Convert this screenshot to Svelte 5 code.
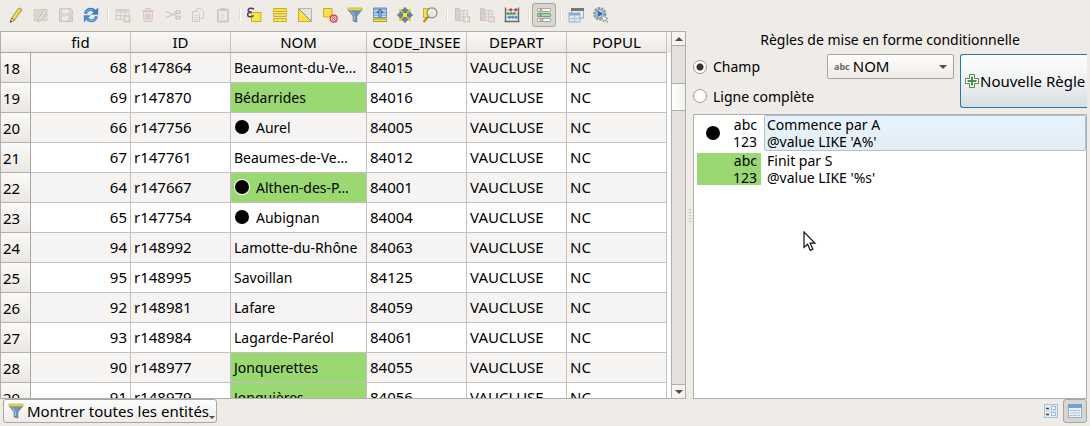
<script>
  const columns = ['fid', 'ID', 'NOM', 'CODE_INSEE', 'DEPART', 'POPUL'];

  const rows = [
    { n: 18, fid: 68, id: 'r147864', nom: 'Beaumont-du-Ve…', code: '84015' },
    { n: 19, fid: 69, id: 'r147870', nom: 'Bédarrides', code: '84016', green: true },
    { n: 20, fid: 66, id: 'r147756', nom: 'Aurel', code: '84005', dot: true },
    { n: 21, fid: 67, id: 'r147761', nom: 'Beaumes-de-Ve…', code: '84012' },
    { n: 22, fid: 64, id: 'r147667', nom: 'Althen-des-P…', code: '84001', green: true, dot: true },
    { n: 23, fid: 65, id: 'r147754', nom: 'Aubignan', code: '84004', dot: true },
    { n: 24, fid: 94, id: 'r148992', nom: 'Lamotte-du-Rhône', code: '84063' },
    { n: 25, fid: 95, id: 'r148995', nom: 'Savoillan', code: '84125' },
    { n: 26, fid: 92, id: 'r148981', nom: 'Lafare', code: '84059' },
    { n: 27, fid: 93, id: 'r148984', nom: 'Lagarde-Paréol', code: '84061' },
    { n: 28, fid: 90, id: 'r148977', nom: 'Jonquerettes', code: '84055', green: true },
    { n: 29, fid: 91, id: 'r148979', nom: 'Jonquières', code: '84056', green: true }
  ];

  const rules = [
    { name: 'Commence par A', expr: "@value LIKE 'A%'", dot: true, selected: true },
    { name: 'Finit par S', expr: "@value LIKE '%s'", green: true }
  ];

  const tools = [
    [
      { icon: 'pencil', label: 'Basculer en mode édition' },
      { icon: 'multiedit', label: 'Édition multiple', off: true },
      { icon: 'save', label: 'Enregistrer', off: true },
      { icon: 'reload', label: 'Recharger la table' }
    ],
    [
      { icon: 'addrow', label: 'Ajouter une entité', off: true },
      { icon: 'trash', label: 'Supprimer', off: true },
      { icon: 'cut', label: 'Couper', off: true },
      { icon: 'copy', label: 'Copier', off: true },
      { icon: 'paste', label: 'Coller', off: true }
    ],
    [
      { icon: 'expression', label: 'Sélectionner par expression' },
      { icon: 'selectall', label: 'Tout sélectionner' },
      { icon: 'invert', label: 'Inverser la sélection' },
      { icon: 'deselect', label: 'Tout désélectionner' },
      { icon: 'funnel', label: 'Filtrer' },
      { icon: 'totop', label: 'Déplacer en haut' },
      { icon: 'pan', label: 'Centrer sur la sélection' },
      { icon: 'zoom', label: 'Zoomer sur la sélection' }
    ],
    [
      { icon: 'newfield', label: 'Nouveau champ', off: true },
      { icon: 'delfield', label: 'Supprimer le champ', off: true },
      { icon: 'abacus', label: 'Calculatrice de champ' }
    ],
    [{ icon: 'conditional', label: 'Mise en forme conditionnelle', active: true }],
    [
      { icon: 'dock', label: 'Ancrer la table' },
      { icon: 'actions', label: 'Actions' }
    ]
  ];

  let scope = $state('champ');
  let field = $state('NOM');
</script>

{#snippet glyph(name)}
  <svg class="glyph" width="16" height="16" viewBox="0 0 16 16" aria-hidden="true">
    {#if name === 'pencil'}
      <path d="M10.5 1.2 13.8 3.2 6.6 13 3.4 11z" fill="#e0ca38" stroke="#a8982a" stroke-width=".8" />
      <path d="M11.8 2.2 5 12" stroke="#fbf08a" />
      <path d="M3.4 11 6.6 13 2.2 15.4z" fill="#e6d8c4" stroke="#666" stroke-width=".7" />
      <path d="M2.6 13.4 4.2 14.4 2 15.6z" fill="#333" />
      <path d="M10.5 1.2 11.2.4 14.3 2.3 13.8 3.2z" fill="#9a9a8c" />
    {:else if name === 'multiedit'}
      <path d="M1 2.5h13v2.5H1zM1 6.8h13v2.5H1zM1 11.2h13v2.5H1z" fill="#c9c7b4" stroke="#aaa896" />
      <path d="M12 2 14.5 3.6 8 13 4.8 14.8 5.5 11.4z" fill="#e2dcc8" stroke="#8e8878" />
    {:else if name === 'save'}
      <path d="M1.5 1.5h11l2 2v11h-13z" fill="#c2c2c2" stroke="#999" />
      <path d="M4 2h7v4.5H4zM3.5 9h8v5h-8z" fill="#eee" stroke="#aaa" stroke-width=".7" />
      <path d="M14 7 15.5 8.4 10 14.6 8 15z" fill="#dcb8ae" stroke="#a99" stroke-width=".6" />
    {:else if name === 'reload'}
      <path d="M2.500 6.800C3 3.400 6 1.900 9 2.500c1.300.3 2.200 1 2.900 1.800" fill="none" stroke="#3d7dc4" stroke-width="3.200" />
      <path d="M15.200.6v7.200H8z" fill="#3d7dc4" />
      <path d="M13.500 9.200C13 12.600 10 14.100 7 13.500c-1.300-.3-2.200-1-2.900-1.800" fill="none" stroke="#4c8dd2" stroke-width="3.200" />
      <path d="M.8 15.400V8.200H8z" fill="#4c8dd2" />
      <path d="M3 5.500C4 3 7 2 9.500 3M6 13.200c2 .6 4.500 0 6-2" fill="none" stroke="#a7cbee" stroke-width=".9" />
    {:else if name === 'addrow'}
      <path d="M1 2.500h13v10H1z" fill="#e8e8e4" stroke="#a8a8a4" />
      <path d="M1 3h13v2.500H1z" fill="#bbb" />
      <path d="M1 8.500h13M5.500 3v9.500M10 3v9.500" stroke="#aaa" />
      <path d="M8.500 8.500h7v7h-7z" fill="#a5a27e" />
      <path d="M12 9.500v5M9.500 12h5M10.200 10.200l3.600 3.600M13.800 10.200l-3.600 3.600" stroke="#fff" stroke-width=".8" />
    {:else if name === 'trash'}
      <path d="M3.500 4.500h9l-.5 10H4z" fill="#e8d6d6" stroke="#b89898" />
      <path d="M2 3.800h12M6 3.500v-2h4v2M6.300 6.500v6M8 6.500v6M9.700 6.500v6" fill="none" stroke="#b08a8a" />
    {:else if name === 'cut'}
      <path d="M1 4.500 11.500 9M1 10.500 11.500 6" stroke="#999" stroke-width="1.300" fill="none" />
      <ellipse cx="13" cy="5" rx="2.200" ry="1.500" fill="none" stroke="#888" stroke-width="1.200" />
      <ellipse cx="13" cy="10.500" rx="2.200" ry="1.500" fill="none" stroke="#888" stroke-width="1.200" />
    {:else if name === 'copy'}
      <path d="M6.500 1.500H11l2.500 2.500v7h-7z" fill="#eee" stroke="#aaa" />
      <path d="M2.500 4.500H7L9.500 7v7.500h-7z" fill="#eee" stroke="#a5a5a5" />
      <path d="M4 8.500h4M4 10.500h4M4 12.500h4" stroke="#bbb" />
    {:else if name === 'paste'}
      <path d="M2.500 2.500h11v12.500h-11z" fill="#bdbdb8" stroke="#9c9c98" />
      <path d="M4.500 4.500h7v8.500h-7z" fill="#f2f2f2" />
      <path d="M5.500 1h5v2.500h-5z" fill="#999" />
      <path d="M6 7h4M6 9h4M6 11h3" stroke="#bbb" />
    {:else if name === 'expression'}
      <path d="M4.500 5.500h9.500v9H4.500z" fill="#fbe64a" stroke="#c9ab1e" />
      <path d="M7 2.300C4.500.4 1.200 1.200 1.200 3.300c0 1.400 1.500 1.900 3.300 1.800C2 5.200.5 6 .5 7.600c0 2.500 4 2.900 6.200.9" fill="none" stroke="#5d3370" stroke-width="1.600" />
    {:else if name === 'selectall'}
      <path d="M1.500 1.500h13v3h-13zM1.500 6.500h13v3h-13zM1.500 11.500h13v3h-13z" fill="#fbe24a" stroke="#cfae22" />
    {:else if name === 'invert'}
      <path d="M1.500 1.500h13v13h-13z" fill="#e3e4e6" stroke="#b9b49a" />
      <path d="M1.500 1.500v13h13z" fill="#fbe24a" stroke="#d0ae22" />
      <path d="M2 2l12 12" stroke="#8b8b86" />
    {:else if name === 'deselect'}
      <path d="M1.500 1.500h8.500v8.500H1.500z" fill="#fbe24a" stroke="#cfae22" />
      <circle cx="11.700" cy="11.700" r="3.500" fill="#f6d5d5" stroke="#d43c3c" stroke-width="1.200" />
      <path d="M9.200 9.200l5 5M9.500 12l2.400 2.400M11.500 9.200l2.400 2.400" stroke="#d43c3c" stroke-width=".9" />
    {:else if name === 'funnel'}
      <path d="M1 2.800h14L9.800 9v6l-3.600-1V9z" fill="#6a94c0" stroke="#4d7297" stroke-width=".8" />
      <path d="M1 1h14v2.300H1z" fill="#f0dc4a" stroke="#c0a82c" stroke-width=".7" />
      <path d="M4 4.300 7.400 8.500V13" fill="none" stroke="#a9c6e2" />
    {:else if name === 'totop'}
      <path d="M1.500 1h13v10h-13z" fill="#8bb2d6" stroke="#6f93b5" />
      <path d="M2 4h12M2 7h12M2 9.500h12" stroke="#d2e2f0" />
      <path d="M1.500 12h13v2.500h-13z" fill="#fbe24a" stroke="#b69c2a" />
      <path d="M8 1.500 12 6H9.500v4.500h-3V6H4z" fill="#326ba3" />
      <path d="M8 3v7" stroke="#c4daee" />
    {:else if name === 'pan'}
      <path d="M2 2h4v4H2zM10 2h4v4h-4zM2 10h4v4H2zM10 10h4v4h-4z" fill="#e6cc3e" />
      <path d="M5.500 5.500h5v5h-5z" fill="#fbe24a" stroke="#cfae22" />
      <path d="M8 .3 11.200 4H9.200v1.500H6.800V4H4.800zM8 15.700 4.800 12h2v-1.500h2.400V12h2zM.3 8 4 4.800v2h1.500v2.400H4v2zM15.700 8 12 11.200v-2h-1.500V6.800H12v-2z" fill="#5b87b4" stroke="#3d638c" stroke-width=".6" />
    {:else if name === 'zoom'}
      <path d="M1.500 1.500h9v9h-9z" fill="#fbe24a" stroke="#cfae22" />
      <path d="M6.300 9.500 1.500 15" stroke="#c08c2e" stroke-width="2.200" />
      <circle cx="10" cy="5.800" r="5" fill="#e9e9df" fill-opacity=".9" stroke="#8d8d88" stroke-width="1.200" />
      <path d="M7 5.500C7.300 3.800 8.700 2.900 10.200 2.900" fill="none" stroke="#fff" stroke-width="1.200" />
    {:else if name === 'newfield' || name === 'delfield'}
      <path d="M1.500 1.500h4v12h-4z" fill="#b8b8b0" stroke="#999" />
      <path d="M6 3.500h7.500v10H6z" fill="#e2e2dc" stroke="#a8a8a0" />
      <path d="M2 5h3.500M2 8h3.500M2 11h3.500M6 7h7.500M6 10h7.500M9.500 3.500v10" stroke="#aaa" />
      <path d="M9 9h7v6.500H9z" fill={name === 'newfield' ? '#a5a27e' : '#c8a09c'} />
      <path d="M10.500 10.500l4 3.500M14.500 10.500l-4 3.500" stroke="#fff" />
      {#if name === 'newfield'}<path d="M12.500 9.500v5.500M10 12.200h5" stroke="#fff" stroke-width=".8" />{/if}
    {:else if name === 'abacus'}
      <path d="M1.500.5v14M14.500.5v14M.5 14.500h15" stroke="#6b6b6b" stroke-width="1.400" />
      <path d="M2 2.800h12M2 6.500h12M2 10.200h12" stroke="#999" stroke-width=".8" />
      <g fill="#d6383e"><circle cx="6.800" cy="2.800" r="1.600" /><circle cx="11.800" cy="2.800" r="1.600" /></g>
      <g fill="#4aa564"><circle cx="4" cy="6.500" r="1.600" /><circle cx="7" cy="6.500" r="1.600" /><circle cx="10" cy="6.500" r="1.600" /></g>
      <g fill="#5c8fc4"><circle cx="5.500" cy="10.200" r="1.600" /><circle cx="8.700" cy="10.200" r="1.600" /><circle cx="12" cy="10.200" r="1.600" /></g>
    {:else if name === 'conditional'}
      <rect x="1.500" y="1.500" width="13" height="3" rx=".6" fill="#fff" stroke="#a5a5a5" />
      <rect x="1.500" y="6.500" width="13" height="3" rx=".6" fill="#a4dba8" stroke="#62a567" />
      <rect x="1.500" y="11.500" width="13" height="3" rx=".6" fill="#fff" stroke="#a5a5a5" />
      <path d="M3.500 3h3M3.500 8h2" stroke="#555" />
      <path d="M3.500 13h4" stroke="#d6383e" />
    {:else if name === 'dock'}
      <rect x="3.500" y="1.500" width="12" height="9.500" fill="#ececec" stroke="#a8a8a8" />
      <path d="M3 1h13v3H3z" fill="#777" />
      <rect x="1" y="6" width="11" height="9" fill="#dbe9f5" stroke="#8fb3d2" />
      <path d="M1 6h11v2.500H1z" fill="#86afd6" />
      <path d="M1 11.500h11M6.500 8v7" stroke="#a3c2dd" />
    {:else if name === 'actions'}
      <circle cx="6.800" cy="6.800" r="5.500" fill="#dfe8f0" stroke="#8a98a4" stroke-width="2.400" stroke-dasharray="2.400 .9" />
      <circle cx="6.800" cy="6.800" r="4.200" fill="#c4d9ec" stroke="#7e90a0" />
      <path d="M4.600 3.600 10.200 6.800 4.600 10z" fill="#2d6cab" />
      <path d="M8.500 8.500 15 11.500 12.700 12.300 15 14.800 14 15.600 11.800 13 10.500 15z" fill="#fff" stroke="#888" stroke-width=".8" />
    {:else if name === 'form'}
      <rect x="1.500" y="1.500" width="13" height="13" fill="#e4edf5" stroke="#a3c0de" />
      <path d="M3 5.500h3M3 11.500h3" stroke="#444" stroke-width="1.400" />
      <rect x="8.500" y="3.500" width="4" height="3" fill="#fff" stroke="#9bbcdb" />
      <rect x="8.500" y="9.500" width="4" height="3" fill="#fff" stroke="#9bbcdb" />
      <path d="M3 8h10" stroke="#c4d6e8" />
    {:else if name === 'table'}
      <rect x="1.500" y="1.500" width="13" height="13" fill="#f0f4f8" stroke="#8fb0d2" />
      <path d="M1 1h14v4H1z" fill="#6da3d8" />
      <path d="M3 7.500h10M3 10h10M3 12.500h10" stroke="#a3bfdb" />
      <path d="M5.500 5v9M10.500 5v9" stroke="#d9e5f0" />
    {:else if name === 'plus'}
      <path d="M5.500 1.500h5v4h4v5h-4v4h-5v-4h-4v-5h4z" fill="#fff" stroke="#4c8d4f" />
      <path d="M8 3.500v9M3.500 8h9" stroke="#4c8d4f" stroke-width="2" />
    {/if}
  </svg>
{/snippet}

<div class="window">
  <div class="toolbar" role="toolbar" aria-label="Table attributaire">
    {#each tools as group, g}
      {#if g > 0}<span class="sep"></span>{/if}
      {#each group as tool}
        <button class="tool" class:active={tool.active} class:off={tool.off} disabled={tool.off} aria-label={tool.label}>
          {@render glyph(tool.icon)}
        </button>
      {/each}
    {/each}
  </div>

  <main class="body">
    <section class="grid-pane">
      <div class="viewport">
        <table>
          <colgroup>
            <col class="c-num" /><col class="c-std" /><col class="c-std" /><col class="c-nom" />
            <col class="c-std" /><col class="c-std" /><col class="c-std" /><col />
          </colgroup>
          <thead>
            <tr>
              <th class="corner"></th>
              {#each columns as c}<th scope="col">{c}</th>{/each}
              <th class="rest"></th>
            </tr>
          </thead>
          <tbody>
            {#each rows as r}
              <tr>
                <th scope="row">{r.n}</th>
                <td class="num">{r.fid}</td>
                <td>{r.id}</td>
                <td class="name" class:green={r.green}>
                  {#if r.dot}<span class="dot" class:ring={r.green}></span>{/if}{r.nom}
                </td>
                <td>{r.code}</td>
                <td>VAUCLUSE</td>
                <td>NC</td>
                <td class="rest"></td>
              </tr>
            {/each}
          </tbody>
        </table>
      </div>
      <div class="scrollbar">
        <button class="step" aria-label="Défiler vers le haut"><i class="tri up"></i></button>
        <div class="track"><div class="thumb"></div></div>
        <button class="step last" aria-label="Défiler vers le bas"><i class="tri"></i></button>
      </div>
    </section>

    <div class="splitter"><i></i><i></i><i></i><i></i><i></i></div>

    <section class="rules-pane">
      <h1>Règles de mise en forme conditionnelle</h1>
      <div class="form">
        <label class="radio"><input type="radio" name="scope" value="champ" bind:group={scope} />Champ</label>
        <div class="combo">
          <span class="type">abc</span>
          <select bind:value={field} aria-label="Champ">
            {#each columns as c}<option>{c}</option>{/each}
          </select>
          <i class="tri"></i>
        </div>
        <button class="new-rule">{@render glyph('plus')}Nouvelle Règle</button>
        <label class="radio"><input type="radio" name="scope" value="ligne" bind:group={scope} />Ligne complète</label>
      </div>
      <ul class="rules">
        {#each rules as rule}
          <li>
            <div class="preview" class:green={rule.green}>
              {#if rule.dot}<span class="dot big"></span>{/if}
              <span class="sample">abc<br />123</span>
            </div>
            <button class="rule" class:selected={rule.selected}>{rule.name}<br />{rule.expr}</button>
          </li>
        {/each}
      </ul>
    </section>
  </main>

  <footer>
    <button class="filter">{@render glyph('funnel')}Montrer toutes les entités<i class="tri"></i></button>
    <span class="views">
      <button class="view" aria-label="Vue formulaire">{@render glyph('form')}</button>
      <button class="view on" aria-label="Vue table">{@render glyph('table')}</button>
    </span>
  </footer>

  <svg class="cursor" width="14" height="21" viewBox="0 0 14 21" aria-hidden="true">
    <path d="M1 1v15.500l3.600-3.300 2.700 6.200 2.600-1.200-2.700-6h4.700z" fill="#fff" stroke="#111" stroke-width="1.200" />
  </svg>
</div>

<style>
  :global(body) {
    margin: 0;
    background: #efebe7;
  }
  .window {
    position: relative;
    display: flex;
    flex-direction: column;
    height: 100vh;
    overflow: hidden;
    color: #000;
    background: #efebe7;
    font: 14px/17px "Noto Sans", "Open Sans", sans-serif;
  }
  button,
  select {
    font: inherit;
    color: inherit;
    margin: 0;
    padding: 0;
    border: 0;
    background: none;
  }
  .glyph {
    display: block;
    flex: none;
  }
  .toolbar {
    box-sizing: border-box;
    display: flex;
    align-items: center;
    height: 31px;
    padding: 0 0 1px 4px;
    flex: none;
  }
  .tool {
    box-sizing: border-box;
    width: 25px;
    height: 22px;
    padding-left: 4px;
  }
  .tool.off {
    opacity: 0.45;
  }
  .tool.active {
    width: 24px;
    height: 24px;
    margin-right: 1px;
    padding-left: 3px;
    border: 1px solid #a9a5a1;
    border-radius: 3px;
    background: #d9d5d1;
  }
  .sep {
    width: 1px;
    height: 12px;
    margin: 0 2px 0 4px;
    background: #fff;
    box-shadow: -1px 0 #dedad6;
  }
  .body {
    flex: 1;
    min-height: 0;
    display: grid;
    grid-template-columns: minmax(0, 686fr) 7px minmax(0, 397fr);
  }
  .grid-pane {
    display: flex;
    min-height: 0;
    border: 1px solid #b0adaa;
    background: #fff;
  }
  .viewport {
    flex: 1;
    min-width: 0;
    overflow: hidden;
  }
  table {
    width: 100%;
    table-layout: fixed;
    border-collapse: separate;
    border-spacing: 0;
    font-size: 15px;
  }
  .c-num {
    width: 30px;
  }
  .c-std {
    width: 100px;
  }
  .c-nom {
    width: 136px;
  }
  th {
    font-weight: normal;
    background: linear-gradient(#fbf9f7, #ebe8e4);
  }
  th,
  td {
    box-sizing: border-box;
    white-space: nowrap;
    overflow: hidden;
  }
  thead th {
    height: 21px;
    padding: 0;
    border-right: 1px solid #c8c4c1;
    border-bottom: 1px solid #a9a5a2;
  }
  thead .corner {
    border-right: 0;
  }
  thead .rest {
    border-right: 0;
    border-bottom-color: #ebe8e4;
  }
  tbody th {
    padding: 2px 0 0 2px;
    text-align: left;
    border-right: 1px solid #a9a5a2;
    border-bottom: 1px solid #b4b0ad;
  }
  td {
    height: 30px;
    padding: 0 3px;
    border-right: 1px solid #c3c0bd;
    border-bottom: 1px solid #c3c0bd;
  }
  tr:nth-child(odd) td {
    background: #f5f4f3;
  }
  tr td.rest {
    border: 0;
    background: #fff;
  }
  .num {
    text-align: right;
  }
  .name {
    font-size: 14px;
  }
  tr td.green,
  .green {
    background: #9ad972;
  }
  .dot {
    display: inline-block;
    width: 14px;
    height: 14px;
    margin: 0 7px 0 1px;
    border-radius: 50%;
    background: #000;
    vertical-align: -1px;
  }
  .dot.ring {
    box-shadow: 0 0 0 1px #fff;
  }
  .dot.big {
    margin: 0;
  }
  .scrollbar {
    display: flex;
    flex-direction: column;
    width: 13px;
    border-left: 1px solid #b0adaa;
  }
  .step {
    display: flex;
    align-items: center;
    justify-content: center;
    height: 14px;
    background: #f6f4f2;
    border-bottom: 1px solid #b0adaa;
  }
  .step.last {
    border-bottom: 0;
    border-top: 1px solid #b0adaa;
  }
  .tri {
    width: 0;
    height: 0;
    border: 4px solid transparent;
    border-top-color: #4c4c4c;
    border-bottom: 0;
  }
  .tri.up {
    border-top: 0;
    border-bottom: 4px solid #4c4c4c;
  }
  .track {
    flex: 1;
    padding-top: 37px;
    background: #e2e1de;
  }
  .thumb {
    height: 26px;
    border: solid #b0adaa;
    border-width: 1px 0;
    background: linear-gradient(90deg, #fff, #f2f0ee);
  }
  .splitter {
    display: flex;
    flex-direction: column;
    align-items: center;
    justify-content: center;
    gap: 2px;
  }
  .splitter i {
    width: 2px;
    height: 1px;
    background: #c4c0bc;
  }
  .rules-pane {
    display: flex;
    flex-direction: column;
    min-height: 0;
    padding-right: 3px;
  }
  h1 {
    margin: 0;
    height: 23px;
    font: inherit;
    line-height: 18px;
    text-align: center;
  }
  .form {
    display: grid;
    grid-template-columns: 1fr 127px 127px;
    grid-template-rows: 25px 24px;
    gap: 5px 6px;
    margin-bottom: 6px;
  }
  .radio {
    display: flex;
    align-items: center;
    gap: 6px;
    white-space: nowrap;
  }
  .radio input {
    appearance: none;
    box-sizing: border-box;
    width: 14px;
    height: 14px;
    margin: 0;
    border: 1px solid #9d9a97;
    border-radius: 50%;
    background: #fff;
  }
  .radio input:checked {
    background: radial-gradient(circle, #333 0 3px, #fff 4px);
  }
  .combo {
    box-sizing: border-box;
    display: flex;
    align-items: center;
    padding: 0 6px;
    border: 1px solid #a9a5a1;
    border-radius: 2px;
    background: linear-gradient(#fefefe, #eeebe8);
  }
  .type {
    margin-right: 3px;
    color: #6a6a6a;
    font: bold 9px/17px "Noto Sans", sans-serif;
  }
  select {
    flex: 1;
    min-width: 0;
    appearance: none;
    font-size: 15px;
  }
  .new-rule {
    box-sizing: border-box;
    grid-column: 3;
    grid-row: 1 / 3;
    display: flex;
    align-items: center;
    padding-left: 3px;
    white-space: nowrap;
    font-size: 15px;
    border: 1px solid #2a74a8;
    border-right: 0;
    border-radius: 3px 0 0 3px;
    background: linear-gradient(#fdfdfd, #f0f2f3 50%, #d8dde0);
  }
  .rules {
    flex: 1;
    margin: 0;
    padding: 0;
    list-style: none;
    border: 1px solid #b0adaa;
    background: #fff;
  }
  .rules li {
    display: flex;
    align-items: center;
    height: 36px;
    padding-left: 3px;
  }
  .preview {
    box-sizing: border-box;
    display: flex;
    align-items: center;
    width: 64px;
    height: 32px;
    padding: 0 4px 0 9px;
  }
  .sample {
    margin-left: auto;
    text-align: right;
  }
  .rule {
    box-sizing: border-box;
    flex: 1;
    height: 36px;
    margin-left: 3px;
    padding-left: 2px;
    text-align: left;
    border: 1px solid transparent;
    border-radius: 2px;
  }
  .rule.selected {
    border-color: #abc3d6;
    background: linear-gradient(#e8f4fd, #e2edf5);
  }
  footer {
    display: flex;
    justify-content: space-between;
    flex: none;
    height: 27px;
    padding: 0 3px;
  }
  .filter {
    box-sizing: border-box;
    display: flex;
    align-items: center;
    height: 24px;
    padding: 0 1px 0 4px;
    font-size: 15px;
    border: 1px solid #a9a5a1;
    border-radius: 3px;
    background: linear-gradient(#fefefe, #eeebe8);
  }
  .filter .glyph {
    margin-right: 3px;
  }
  .filter .tri {
    align-self: flex-end;
    margin-bottom: 3px;
    border-width: 3px 3px 0;
  }
  .views {
    display: flex;
  }
  .view {
    box-sizing: border-box;
    width: 24px;
    height: 24px;
    padding-left: 3px;
    border: 1px solid transparent;
  }
  .view.on {
    border-color: #a9a5a1;
    border-radius: 3px;
    background: #d9d5d1;
  }
  .cursor {
    position: absolute;
    left: 803px;
    top: 231px;
  }
</style>
